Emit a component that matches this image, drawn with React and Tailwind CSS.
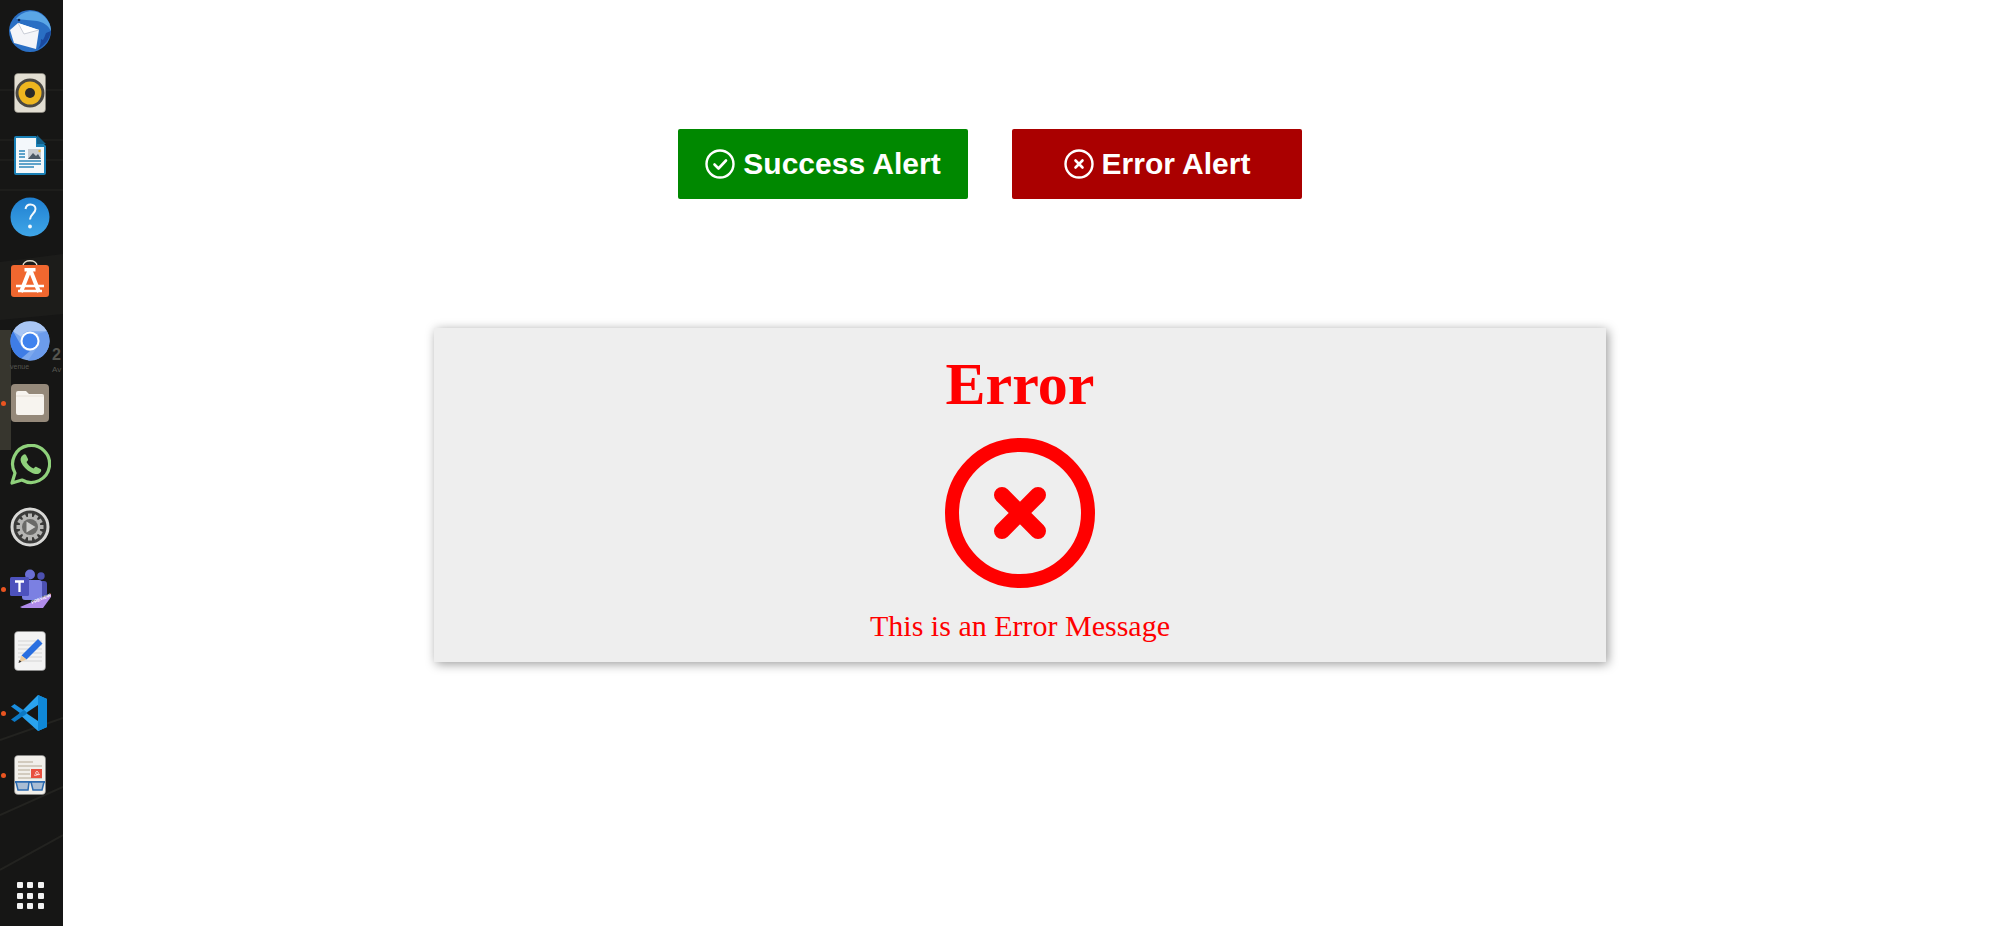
import React from "react";

function Thunderbird() {
  return (
    <svg width="44" height="44" viewBox="0 0 44 44">
      <circle cx="22" cy="22" r="21" fill="#2a6fc4" />
      <path d="M8 10C14 2 26 0 33 5c6 4 10 10 10 17-3-6-8-9-14-10-7-1-14-1-21-2z" fill="#5aa6e6" />
      <path d="M30 40c6-3 12-10 13-18l-5 2c-1 3-2 5-3 7l-2-1c0 4-1 7-3 10z" fill="#1a4aa0" />
      <circle cx="11" cy="11" r="1.300" fill="#12264f" />
      <path d="M2 21L10 14l21 7-3 19-22-6z" fill="#f4f5f8" />
      <path d="M10 14l6 11 15-4" fill="#ffffff" stroke="#bcc2cd" strokeWidth="0.800" />
    </svg>
  );
}

function Rhythmbox() {
  return (
    <svg width="32" height="40" viewBox="0 0 32 40">
      <rect x="0.500" y="0.500" width="31" height="39" rx="3.500" fill="#e2ded2" stroke="#8f8c82" strokeWidth="0.600" />
      <circle cx="16" cy="20" r="14.500" fill="#4a4843" />
      <circle cx="16" cy="20" r="11.500" fill="#eeb61f" />
      <circle cx="16" cy="20" r="5" fill="#2b2a28" />
    </svg>
  );
}

function Writer() {
  return (
    <svg width="32" height="40" viewBox="0 0 32 40">
      <path d="M0 3a2 2 0 0 1 2-2h20l10 10v27a2 2 0 0 1-2 2H2a2 2 0 0 1-2-2z" fill="#1a80b6" />
      <path d="M2 3h20v9h8v26H2z" fill="#f4f8fb" />
      <path d="M23 0l9 9h-9z" fill="#135f88" />
      <path d="M5 16h6M5 19h6M5 22h6M5 26h22M5 29h22M5 32h15" stroke="#2c86ba" strokeWidth="1.600" />
      <rect x="14" y="14" width="13" height="10" fill="#c9ccd0" />
      <path d="M14 24l5-6 3 3 2-2 3 5z" fill="#4d5a66" />
      <circle cx="25.500" cy="16" r="1.200" fill="#e6b53a" />
    </svg>
  );
}

function Help() {
  return (
    <svg width="40" height="40" viewBox="0 0 40 40">
      <defs>
        <linearGradient id="helpBg" x1="0" y1="0" x2="0" y2="1">
          <stop offset="0" stopColor="#1f7fd0" />
          <stop offset="1" stopColor="#3fa6e8" />
        </linearGradient>
      </defs>
      <circle cx="20" cy="20" r="19.500" fill="url(#helpBg)" />
      <path d="M15.500 12c.500-3 2.500-4.500 5-4.500 3 0 5 2 5 4.500 0 4.500-5.500 5-5.500 10.500" fill="none" stroke="#f3f8fc" strokeWidth="2" />
      <circle cx="20" cy="29.500" r="1.900" fill="#f3f8fc" />
    </svg>
  );
}

function Store() {
  return (
    <svg width="38" height="38" viewBox="0 0 38 38">
      <path d="M12 6c0-7 14-7 14 0" fill="none" stroke="#e3dccb" strokeWidth="1.500" />
      <rect x="0" y="5" width="38" height="32" rx="3" fill="#f0672f" />
      <path d="M19 9l-9 23M19 9l9 23" stroke="#fff" strokeWidth="4" fill="none" />
      <path d="M5 26h28M7 31h24" stroke="#fff" strokeWidth="2.600" />
      <rect x="13.500" y="8" width="11" height="3.500" fill="#fff" />
    </svg>
  );
}

function Chromium() {
  return (
    <svg width="40" height="40" viewBox="0 0 40 40">
      <circle cx="20" cy="20" r="19.500" fill="#7da9ee" />
      <path d="M3 10.200A19.500 19.500 0 0 1 37 10.200H20a10 10 0 0 0-9 5.500z" fill="#a9c6f4" />
      <path d="M3 10.200L12 26a10 10 0 0 0 8 4l-8.700 7.500A19.500 19.500 0 0 1 3 10.200z" fill="#3f7de6" />
      <path d="M37 10.200A19.500 19.500 0 0 1 18 39.400L27.500 26a10 10 0 0 0 0-13z" fill="#6c9cec" />
      <circle cx="20" cy="20" r="9.500" fill="#fff" />
      <circle cx="20" cy="20" r="7.500" fill="#3f82ee" />
    </svg>
  );
}

function Files() {
  return (
    <svg width="38" height="38" viewBox="0 0 38 38">
      <rect x="0" y="0" width="38" height="38" rx="4" fill="#95897a" />
      <path d="M5 9a2 2 0 0 1 2-2h8l3 3h13a2 2 0 0 1 2 2v17a2 2 0 0 1-2 2H7a2 2 0 0 1-2-2z" fill="#f7f4ef" />
      <path d="M5 12h28" stroke="#e2dcd2" strokeWidth="0.800" />
    </svg>
  );
}

function WhatsApp() {
  return (
    <svg width="42" height="42" viewBox="0 0 42 42">
      <path d="M3 39l3-10A18.500 18.500 0 1 1 13 36z" fill="none" stroke="#8fd17b" strokeWidth="3.200" strokeLinejoin="round" />
      <path d="M14 11c1-1 2.500-1 3 0l2 4c.300.800 0 1.500-1.500 3 1.500 3 3.500 5 7 6.500 1.500-1.500 2.300-2 3-1.500l4 2c1 .600 1 2-.3 3.500-2 2-5 2-9 0-5-2.500-8-6-10-10-1.200-3-.7-5.500 1.800-7.500z" fill="#8fd17b" />
    </svg>
  );
}

function Settings() {
  const teeth = [0, 30, 60, 90, 120, 150];
  return (
    <svg width="40" height="40" viewBox="0 0 40 40">
      <circle cx="20" cy="20" r="18" fill="#3a3a39" stroke="#d8d8d6" strokeWidth="3" />
      {teeth.map((a) => (
        <rect key={a} x="18" y="6.500" width="4" height="27" fill="#b5b5b3" transform={`rotate(${a} 20 20)`} />
      ))}
      <circle cx="20" cy="20" r="10.500" fill="#b5b5b3" />
      <circle cx="20" cy="20" r="8" fill="#6a6a68" />
      <path d="M16.500 14.500l9 5.500-9 5.500z" fill="#cfcfcd" />
    </svg>
  );
}

function Teams() {
  return (
    <svg className="ml-[2px]" width="42" height="40" viewBox="0 0 42 40">
      <circle cx="20" cy="5.500" r="5" fill="#6b6fd4" />
      <circle cx="31" cy="7" r="3.700" fill="#4c50b0" />
      <rect x="25" y="12" width="12" height="15" rx="3" fill="#4c50b0" />
      <rect x="12" y="11" width="20" height="20" rx="3" fill="#7b80e2" />
      <rect x="0" y="8" width="19" height="19" rx="1.500" fill="#4d52bd" />
      <path d="M5 12.500h9M9.500 12.500v10.500" stroke="#fff" strokeWidth="2.300" />
      <path d="M10 38l31-13v3l-8 11H12z" fill="#b08bea" />
      <text x="22" y="35" fontSize="4.500" fontWeight="700" fill="#ffffff" transform="rotate(-22 22 35)" fontFamily="Liberation Sans, sans-serif">PREVIEW</text>
    </svg>
  );
}

function Gedit() {
  return (
    <svg width="32" height="40" viewBox="0 0 32 40">
      <rect x="0.500" y="0.500" width="31" height="39" rx="3.500" fill="#f3f3f3" stroke="#8d8d8d" strokeWidth="0.600" />
      <path d="M4 10h24M4 14h24M4 18h24M4 22h24M4 26h24M4 30h24" stroke="#d5d5d5" strokeWidth="1" />
      <path d="M24 8l4.500 4.500-16 16-5-4z" fill="#2a6fe0" />
      <path d="M7.500 24.500l5 4-7.500 3z" fill="#eccb9c" />
      <path d="M5.500 29l2 1.700-3 1.200z" fill="#333" />
    </svg>
  );
}

function VsCode() {
  return (
    <svg width="38" height="38" viewBox="0 0 38 38">
      <path d="M27 1l9 4v28l-9 4L8 20z" fill="#2aa3ef" />
      <path d="M27 1l9 4v28l-9 4z" fill="#0f88d8" />
      <path d="M27 11L15 19l12 8z" fill="#161616" />
      <path d="M0 12.500l3.500-2.500 13 9-3.500 3z" fill="#1a8ee0" />
      <path d="M0 25.500l3.500 2.500 13-9-3.500-3z" fill="#0b78c4" />
    </svg>
  );
}

function Reader() {
  return (
    <svg width="32" height="40" viewBox="0 0 32 40">
      <rect x="0.500" y="0.500" width="31" height="39" rx="3.500" fill="#f1efea" stroke="#8d8d8d" strokeWidth="0.600" />
      <path d="M4 7h15M4 11h24M4 15h12M4 19h12M4 23h24" stroke="#c7c0b0" strokeWidth="1.400" />
      <rect x="17" y="14" width="11" height="9" fill="#e8503f" />
      <path d="M20 20c3 1 5-1 4-3-1-1.500-3 0-2 2 1 1 3 1 4 0" fill="none" stroke="#fff" strokeWidth="0.800" />
      <path d="M1 27h30" stroke="#2c6bb0" strokeWidth="2" />
      <path d="M2 27h13l-1 8H4zM17 27h13l-2 8h-9z" fill="#a9bdd4" stroke="#2c6bb0" strokeWidth="1.500" />
    </svg>
  );
}

function CheckCircle() {
  return (
    <svg width="30" height="30" viewBox="0 0 30 30" fill="none" stroke="#fff">
      <circle cx="15" cy="15" r="13.500" strokeWidth="2.400" />
      <path d="M9.500 15.500l4 4 7.500-8" strokeWidth="2.600" strokeLinecap="round" strokeLinejoin="round" />
    </svg>
  );
}

function CrossCircle() {
  return (
    <svg width="30" height="30" viewBox="0 0 30 30" fill="none" stroke="#fff">
      <circle cx="15" cy="15" r="13.500" strokeWidth="2.400" />
      <path d="M11.500 11.500l7 7M18.500 11.500l-7 7" strokeWidth="2.600" strokeLinecap="round" />
    </svg>
  );
}

const dockItems = [
  { id: "thunderbird", icon: <Thunderbird /> },
  { id: "rhythmbox", icon: <Rhythmbox /> },
  { id: "writer", icon: <Writer /> },
  { id: "help", icon: <Help /> },
  { id: "store", icon: <Store /> },
  { id: "chromium", icon: <Chromium /> },
  { id: "files", icon: <Files />, running: true },
  { id: "whatsapp", icon: <WhatsApp /> },
  { id: "settings", icon: <Settings /> },
  { id: "teams", icon: <Teams />, running: true },
  { id: "gedit", icon: <Gedit /> },
  { id: "vscode", icon: <VsCode />, running: true },
  { id: "reader", icon: <Reader />, running: true },
];

function Dock() {
  return (
    <aside className="relative flex h-[926px] w-[63px] shrink-0 flex-col items-center overflow-hidden bg-[#161615] pr-[3px]">
      {/* wallpaper showing through the dock */}
      <svg className="absolute inset-0" width="63" height="926" viewBox="0 0 63 926">
        <path d="M0 90h63M0 140h63M0 160h63M0 190h63" stroke="#2c2c29" strokeWidth="1" opacity="0.7" />
        <path d="M0 262l63-8v60l-63 6z" fill="#262624" opacity="0.4" />
        <rect x="0" y="330" width="11" height="120" fill="#37362e" />
        <path d="M0 740l63-22M0 815l63-28M0 870l63-35" stroke="#232320" strokeWidth="2" />
        <text x="10" y="369" fontSize="7" fill="#55554f" fontFamily="Liberation Sans, sans-serif">venue</text>
        <text x="52" y="360" fontSize="16" fontWeight="700" fill="#55554f" fontFamily="Liberation Sans, sans-serif">2</text>
        <text x="52" y="372" fontSize="8" fill="#55554f" fontFamily="Liberation Sans, sans-serif">Av</text>
      </svg>
      {dockItems.map((item) => (
        <div key={item.id} className="relative z-10 flex h-[62px] w-full shrink-0 items-center justify-center">
          {item.running && <span className="absolute left-[1px] top-[28.5px] h-[5px] w-[5px] rounded-full bg-[#e95420]" />}
          {item.icon}
        </div>
      ))}
      <div className="relative z-10 mt-auto mb-[17px] grid grid-cols-3 gap-[4.500px]">
        {Array.from({ length: 9 }).map((_, i) => (
          <span key={i} className="h-[6px] w-[6px] rounded-[1px] bg-[#f2f2f2]" />
        ))}
      </div>
    </aside>
  );
}

export default function App() {
  return (
    <div className="flex h-[926px] w-[2004px] overflow-hidden bg-white">
      <Dock />
      <main className="flex-1">
        <div className="ml-[615px] mt-[129px] flex gap-[44px]">
          <button className="flex h-[70px] w-[290px] items-center justify-center gap-[8px] rounded-[2px] bg-[#008800] pb-[1px] font-['Liberation_Sans',sans-serif] text-[30px] font-bold text-white">
            <CheckCircle />
            Success Alert
          </button>
          <button className="flex h-[70px] w-[290px] items-center justify-center gap-[8px] rounded-[2px] bg-[#aa0000] pb-[1px] font-['Liberation_Sans',sans-serif] text-[30px] font-bold text-white">
            <CrossCircle />
            Error Alert
          </button>
        </div>
        <section className="ml-[371px] mt-[129px] flex h-[334px] w-[1172px] flex-col items-center bg-[#eee] pt-[22px] font-['Liberation_Serif',serif] text-[#f00] shadow-[2px_2px_10px_rgba(0,0,0,0.4)]">
          <h1 className="text-[60px] font-bold leading-[69px]">Error</h1>
          <svg className="mt-[19px]" width="150" height="150" viewBox="0 0 150 150" fill="none" stroke="#f00">
            <circle cx="75" cy="75" r="68" strokeWidth="14" />
            <path d="M57 57l36 36M93 57l-36 36" strokeWidth="16" strokeLinecap="round" />
          </svg>
          <p className="mt-[20px] text-[30px] leading-[35px]">This is an Error Message</p>
        </section>
      </main>
    </div>
  );
}
